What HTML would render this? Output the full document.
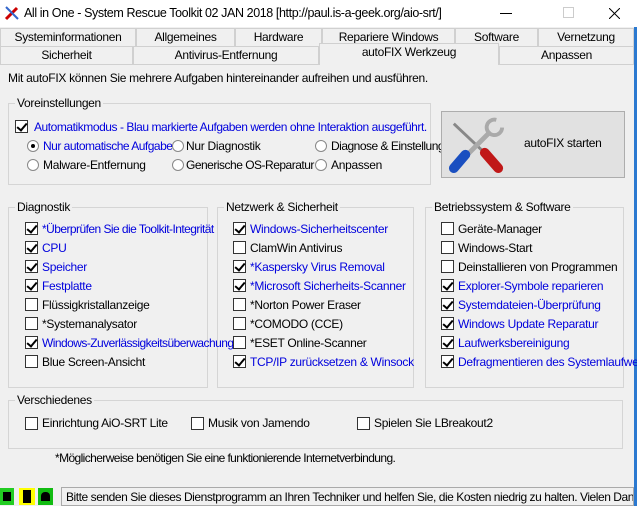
<!DOCTYPE html>
<html><head><meta charset="utf-8"><style>
*{margin:0;padding:0;box-sizing:border-box}
body{width:637px;height:506px;background:#f0f0f0;font-family:"Liberation Sans",Arial,sans-serif;font-size:12px;color:#000;position:relative;overflow:hidden;letter-spacing:-0.3px}
.a{position:absolute;white-space:nowrap;line-height:14px}
.title{left:0;top:0;width:637px;height:27px;background:#fff}
.tab{position:absolute;height:18px;border:1px solid #d0d0d0;border-bottom:none;background:#f0f0f0;text-align:center;line-height:17px}
.gb{position:absolute;border:1px solid #d5d5d5}
.gb>.lg{position:absolute;top:-8px;left:6px;background:#f0f0f0;padding:0 2px;line-height:14px}
.cb{position:absolute;width:13px;height:13px;border:1px solid #333;background:#fff}
.cb.c::after{content:"";position:absolute;left:3px;top:0px;width:4px;height:8px;border:solid #000;border-width:0 2px 2px 0;transform:rotate(40deg)}
.rb{position:absolute;width:12px;height:12px;border:1px solid #888;border-radius:50%;background:#fff}
.rb.c::after{content:"";position:absolute;left:3px;top:3px;width:4px;height:4px;border-radius:50%;background:#000}
.b{color:#0000dd}
</style></head><body>
<div class="a title"></div>
<svg class="a" style="left:4px;top:5px" width="16" height="16" viewBox="0 0 16 16"><path d="M2 14L13 3" stroke="#c00" stroke-width="3"/><path d="M2 2L14 14" stroke="#36c" stroke-width="2"/></svg>
<div class="a" style="left:24px;top:6px;font-size:12.5px;letter-spacing:-0.4px">All in One - System Rescue Toolkit 02 JAN 2018 [http://paul.is-a-geek.org/aio-srt/]</div>
<div class="a" style="left:500px;top:13px;width:12px;height:1px;background:#000"></div>
<div class="a" style="left:563px;top:7px;width:11px;height:11px;border:1px solid #ccc"></div>
<svg class="a" style="left:609px;top:8px" width="11" height="11"><path d="M0 0L11 11M11 0L0 11" stroke="#000" stroke-width="1"/></svg>
<div class="a" style="left:634px;top:27px;width:3px;height:479px;background:#2b79d0"></div>

<div class="tab" style="left:0;top:28px;width:136px">Systeminformationen</div>
<div class="tab" style="left:136px;top:28px;width:99px">Allgemeines</div>
<div class="tab" style="left:235px;top:28px;width:87px">Hardware</div>
<div class="tab" style="left:322px;top:28px;width:133px">Repariere Windows</div>
<div class="tab" style="left:455px;top:28px;width:83px">Software</div>
<div class="tab" style="left:538px;top:28px;width:96px">Vernetzung</div>
<div class="tab" style="left:0;top:46px;width:133px">Sicherheit</div>
<div class="tab" style="left:133px;top:46px;width:186px">Antivirus-Entfernung</div>
<div class="tab" style="left:319px;top:43px;width:180px;height:22px;background:#f0f0f0;line-height:16px;z-index:2">autoFIX Werkzeug</div>
<div class="tab" style="left:499px;top:46px;width:135px">Anpassen</div>
<div class="a" style="left:0;top:64px;width:634px;height:1px;background:#d0d0d0"></div>

<div class="a" style="left:8px;top:71px">Mit autoFIX können Sie mehrere Aufgaben hintereinander aufreihen und ausführen.</div>

<div class="gb" style="left:8px;top:103px;width:423px;height:82px"><span class="lg">Voreinstellungen</span></div>
<div class="cb c" style="left:15px;top:120px"></div><div class="a b" style="left:34px;top:120px;letter-spacing:-0.45px">Automatikmodus - Blau markierte Aufgaben werden ohne Interaktion ausgeführt.</div>
<div class="rb c" style="left:27px;top:140px"></div><div class="a b" style="left:43px;top:139px;letter-spacing:-0.5px">Nur automatische Aufgabe</div>
<div class="rb" style="left:172px;top:140px"></div><div class="a" style="left:186px;top:139px">Nur Diagnostik</div>
<div class="rb" style="left:315px;top:140px"></div><div class="a" style="left:331px;top:139px;letter-spacing:-0.5px">Diagnose &amp; Einstellung</div>
<div class="rb" style="left:27px;top:159px"></div><div class="a" style="left:43px;top:158px">Malware-Entfernung</div>
<div class="rb" style="left:172px;top:159px"></div><div class="a" style="left:186px;top:158px;letter-spacing:-0.5px">Generische OS-Reparatur</div>
<div class="rb" style="left:315px;top:159px"></div><div class="a" style="left:331px;top:158px">Anpassen</div>

<div class="a" style="left:441px;top:111px;width:184px;height:67px;border:1px solid #adadad;background:#e1e1e1"></div>
<svg class="a" style="left:448px;top:116px" width="58" height="58" viewBox="0 0 60 60">
<path d="M6 8 L40 40" stroke="#888" stroke-width="3"/>
<path d="M38 38 L52 54" stroke="#c01818" stroke-width="10" stroke-linecap="round"/>
<path d="M44 16 L16 44" stroke="#aaa" stroke-width="5"/>
<path d="M50 4 A8 8 0 1 0 56 12" fill="none" stroke="#aaa" stroke-width="4"/>
<path d="M18 40 L6 54" stroke="#1a4fc0" stroke-width="10" stroke-linecap="round"/>
</svg>
<div class="a" style="left:524px;top:136px">autoFIX starten</div>

<div class="gb" style="left:8px;top:207px;width:200px;height:181px"><span class="lg">Diagnostik</span></div>
<div class="gb" style="left:217px;top:207px;width:197px;height:181px"><span class="lg">Netzwerk &amp; Sicherheit</span></div>
<div class="gb" style="left:425px;top:207px;width:199px;height:181px"><span class="lg">Betriebssystem &amp; Software</span></div>

<div class="cb c" style="left:25px;top:222px"></div><div class="a b" style="left:42px;top:222px;letter-spacing:-0.55px">*Überprüfen Sie die Toolkit-Integrität</div>
<div class="cb c" style="left:25px;top:241px"></div><div class="a b" style="left:42px;top:241px">CPU</div>
<div class="cb c" style="left:25px;top:260px"></div><div class="a b" style="left:42px;top:260px">Speicher</div>
<div class="cb c" style="left:25px;top:279px"></div><div class="a b" style="left:42px;top:279px">Festplatte</div>
<div class="cb" style="left:25px;top:298px"></div><div class="a" style="left:42px;top:298px">Flüssigkristallanzeige</div>
<div class="cb" style="left:25px;top:317px"></div><div class="a" style="left:42px;top:317px">*Systemanalysator</div>
<div class="cb c" style="left:25px;top:336px"></div><div class="a b" style="left:42px;top:336px;letter-spacing:-0.55px">Windows-Zuverlässigkeitsüberwachung</div>
<div class="cb" style="left:25px;top:355px"></div><div class="a" style="left:42px;top:355px">Blue Screen-Ansicht</div>

<div class="cb c" style="left:233px;top:222px"></div><div class="a b" style="left:250px;top:222px">Windows-Sicherheitscenter</div>
<div class="cb" style="left:233px;top:241px"></div><div class="a" style="left:250px;top:241px">ClamWin Antivirus</div>
<div class="cb c" style="left:233px;top:260px"></div><div class="a b" style="left:250px;top:260px">*Kaspersky Virus Removal</div>
<div class="cb c" style="left:233px;top:279px"></div><div class="a b" style="left:250px;top:279px">*Microsoft Sicherheits-Scanner</div>
<div class="cb" style="left:233px;top:298px"></div><div class="a" style="left:250px;top:298px">*Norton Power Eraser</div>
<div class="cb" style="left:233px;top:317px"></div><div class="a" style="left:250px;top:317px">*COMODO (CCE)</div>
<div class="cb" style="left:233px;top:336px"></div><div class="a" style="left:250px;top:336px">*ESET Online-Scanner</div>
<div class="cb c" style="left:233px;top:355px"></div><div class="a b" style="left:250px;top:355px">TCP/IP zurücksetzen &amp; Winsock</div>

<div class="cb" style="left:441px;top:222px"></div><div class="a" style="left:458px;top:222px">Geräte-Manager</div>
<div class="cb" style="left:441px;top:241px"></div><div class="a" style="left:458px;top:241px">Windows-Start</div>
<div class="cb" style="left:441px;top:260px"></div><div class="a" style="left:458px;top:260px">Deinstallieren von Programmen</div>
<div class="cb c" style="left:441px;top:279px"></div><div class="a b" style="left:458px;top:279px">Explorer-Symbole reparieren</div>
<div class="cb c" style="left:441px;top:298px"></div><div class="a b" style="left:458px;top:298px">Systemdateien-Überprüfung</div>
<div class="cb c" style="left:441px;top:317px"></div><div class="a b" style="left:458px;top:317px">Windows Update Reparatur</div>
<div class="cb c" style="left:441px;top:336px"></div><div class="a b" style="left:458px;top:336px">Laufwerksbereinigung</div>
<div class="cb c" style="left:441px;top:355px"></div><div class="a b" style="left:458px;top:355px">Defragmentieren des Systemlaufwerks</div>

<div class="gb" style="left:8px;top:400px;width:615px;height:49px"><span class="lg">Verschiedenes</span></div>
<div class="cb" style="left:25px;top:417px"></div><div class="a" style="left:42px;top:416px">Einrichtung AiO-SRT Lite</div>
<div class="cb" style="left:191px;top:417px"></div><div class="a" style="left:208px;top:416px">Musik von Jamendo</div>
<div class="cb" style="left:357px;top:417px"></div><div class="a" style="left:374px;top:416px">Spielen Sie LBreakout2</div>
<div class="a" style="left:55px;top:451px;letter-spacing:-0.6px">*Möglicherweise benötigen Sie eine funktionierende Internetverbindung.</div>

<div class="a" style="left:0;top:488px;width:14px;height:17px;background:#2c2"><div style="margin:4px 3px;width:8px;height:9px;background:#000"></div></div>
<div class="a" style="left:19px;top:488px;width:16px;height:17px;background:#ff0"><div style="margin:2px 4px;width:8px;height:13px;background:#000"></div></div>
<div class="a" style="left:38px;top:488px;width:15px;height:17px;background:#1b1"><div style="margin:4px 3px;width:9px;height:9px;background:#000;border-radius:4px 4px 0 0"></div></div>
<div class="a" style="left:61px;top:487px;width:573px;height:19px;border:1px solid #aaa;background:#f0f0f0;padding:2px 0 0 4px;overflow:hidden;letter-spacing:-0.45px">Bitte senden Sie dieses Dienstprogramm an Ihren Techniker und helfen Sie, die Kosten niedrig zu halten. Vielen Dank.</div>
</body></html>
